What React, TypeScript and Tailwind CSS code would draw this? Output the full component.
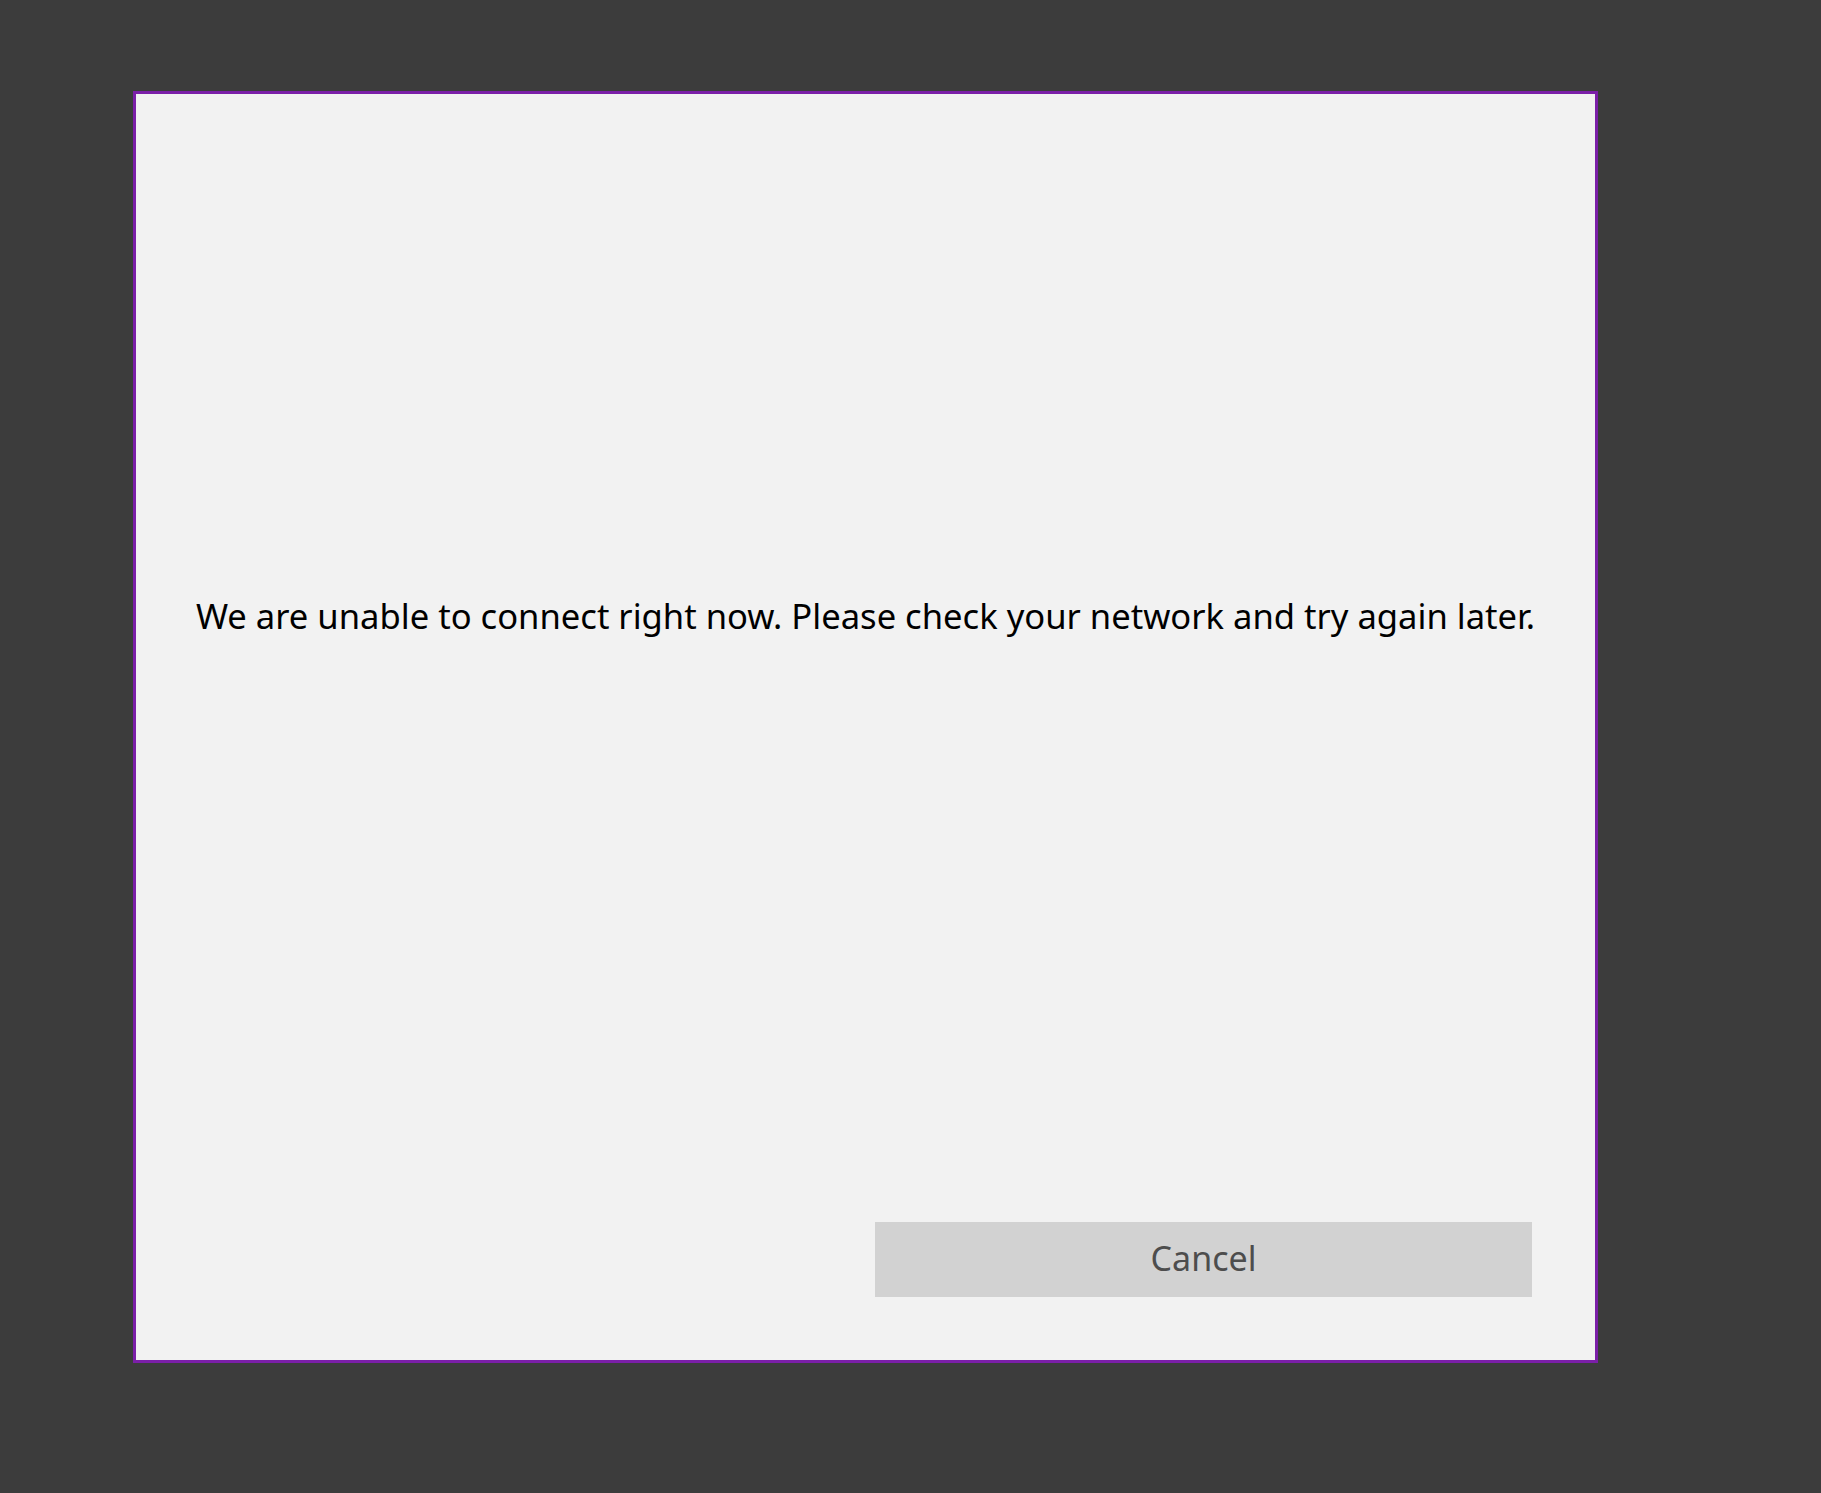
import React from "react"

const MESSAGE = "We are unable to connect right now. Please check your network and try again later."

export default function App() {
    return (
        <div className="min-h-screen bg-[#3c3c3c] pl-[133px] pt-[91px] font-['Noto_Sans',sans-serif]">
            <div className="flex h-[1272px] w-[1465px] flex-col border-[3px] border-[#7b1fa8] bg-[#f2f2f2]">
                <div className="mt-[498px] flex h-[48px] items-center justify-center">
                    <p className="whitespace-nowrap text-[34.6px] leading-[48px] text-black">{MESSAGE}</p>
                </div>
                <div className="mt-auto flex justify-end pb-[63px] pr-[63px]">
                    <button className="h-[75px] w-[657px] bg-[#d2d2d2] pb-[2px] text-[34px] text-[#4d4d4d]">
                        Cancel
                    </button>
                </div>
            </div>
        </div>
    )
}
